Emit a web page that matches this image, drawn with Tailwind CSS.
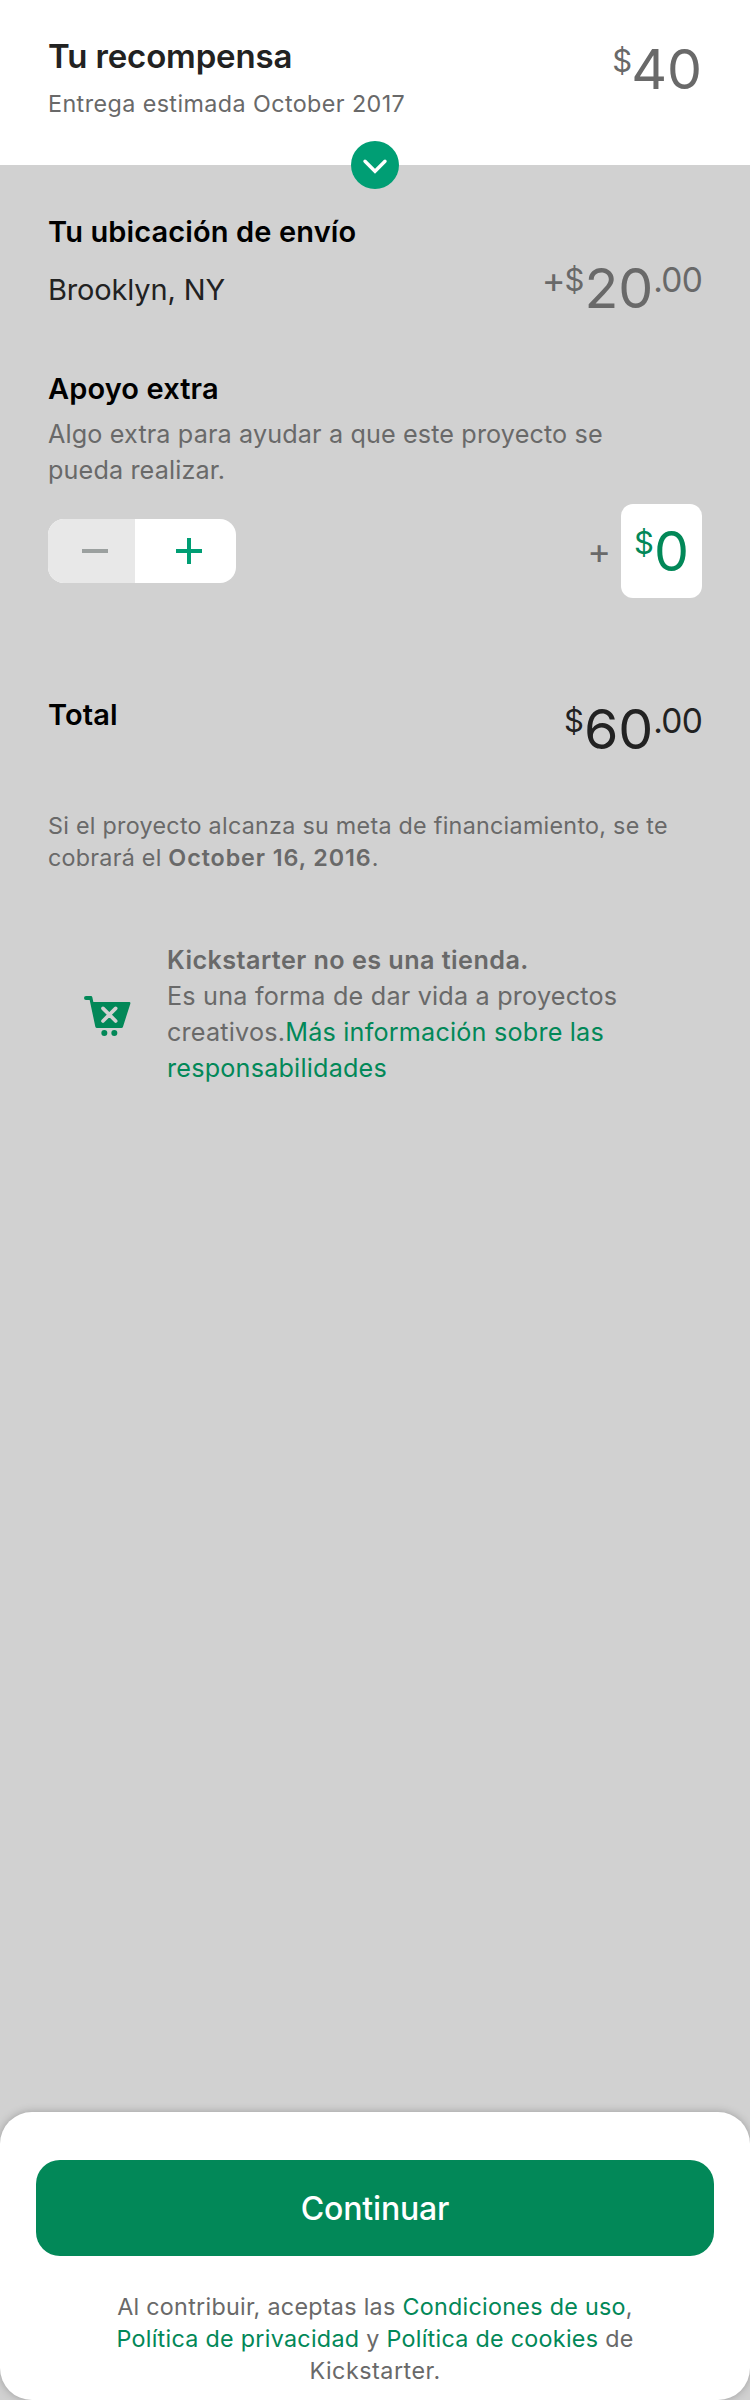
<!DOCTYPE html>
<html lang="es">
<head>
<meta charset="utf-8">
<title>Tu recompensa</title>
<script src="https://cdn.jsdelivr.net/npm/@tailwindcss/browser@4"></script>
</head>
<body class="bg-[#d1d1d1]">
<div class="flex h-[2400px] w-[750px] flex-col overflow-hidden bg-[#d1d1d1] font-['Inter',sans-serif] text-[#696969]">

  <header class="relative flex h-[165px] shrink-0 justify-between bg-white px-12 pt-9">
    <div class="whitespace-nowrap">
      <h1 class="text-[33px] leading-10 font-semibold tracking-[-0.143px] text-[#222222]">Tu recompensa</h1>
      <p class="mt-3 text-[23.3px] leading-8 tracking-[0.42px]">Entrega estimada October 2017</p>
    </div>
    <div class="mt-[5px] flex items-start whitespace-nowrap">
      <span class="-mr-px text-[31px] leading-10">$</span>
      <span class="text-[55.5px] leading-14">40</span>
    </div>
    <div class="absolute top-[141px] left-[351px] size-12 rounded-full bg-[#009e74]">
      <svg viewBox="0 0 48 48" class="size-12" fill="none" stroke="#fff" stroke-width="3.4" stroke-linecap="round"><path d="M14 20.3 24 30.3 34 20.3"/></svg>
    </div>
  </header>

  <main class="flex flex-col px-12 pt-[47px]">
    <section>
      <h2 class="text-[29px] leading-10 font-semibold tracking-[0.12px] text-black">Tu ubicación de envío</h2>
      <div class="flex items-start justify-between whitespace-nowrap">
        <p class="mt-[18px] text-[29px] leading-10 tracking-[-0.15px] text-[#222222]">Brooklyn, NY</p>
        <div class="mt-2 flex items-start">
          <span class="-mr-px text-[36px] leading-10">+</span>
          <span class="text-[31px] leading-10">$</span>
          <span class="text-[55.5px] leading-14">20</span>
          <span class="text-[33.5px] leading-10 tracking-[-0.8px]">.00</span>
        </div>
      </div>
    </section>

    <section class="mt-[53px]">
      <h2 class="text-[29px] leading-10 font-semibold tracking-[0.12px] text-black">Apoyo extra</h2>
      <p class="mt-[7px] text-[25.2px] leading-9 tracking-[0.13px] whitespace-nowrap">Algo extra para ayudar a que este proyecto se<br>pueda realizar.</p>
      <div class="mt-4 flex items-center justify-between">
        <div class="flex h-16 w-[188px] overflow-hidden rounded-2xl bg-white">
          <button class="flex w-[87px] items-center bg-[#e8e8e8] pl-[34px]"><span class="h-1 w-[26px] bg-[#9ba09f]"></span></button>
          <button class="flex flex-1 items-center pl-[41px]">
            <svg viewBox="0 0 26 26" class="size-[26px]" fill="#009e74"><path d="M11 0h4v11h11v4H15v11h-4V15H0v-4h11z"/></svg>
          </button>
        </div>
        <div class="flex items-center">
          <span class="mr-[10px] text-[36px] leading-10">+</span>
          <div class="flex h-[94px] w-[81px] items-start justify-center rounded-xl bg-white pt-[19px] text-[#028858]">
            <span class="text-[31px] leading-10">$</span>
            <span class="text-[55.5px] leading-14">0</span>
          </div>
        </div>
      </div>
    </section>

    <section class="mt-[97px] flex items-start justify-between whitespace-nowrap">
      <h2 class="text-[29px] leading-10 font-semibold tracking-[0.108px] text-black">Total</h2>
      <div class="mt-1.5 flex items-start text-[#222222]">
        <span class="text-[31px] leading-10">$</span>
        <span class="text-[55.5px] leading-14">60</span>
        <span class="text-[33.5px] leading-10 tracking-[-0.8px]">.00</span>
      </div>
    </section>

    <p class="mt-[53px] text-[23.3px] leading-8 tracking-[0.273px] whitespace-nowrap">Si el proyecto alcanza su meta de financiamiento, se te<br><span class="tracking-[0.25px]">cobrará el </span><b class="font-semibold tracking-[0.92px]">October 16, 2016</b>.</p>

    <section class="mt-[68px] flex items-start pl-9">
      <svg viewBox="72 78 141 120" class="mt-[54px] h-10 w-[47px]" fill="#028858">
        <path d="M100 96H208q4 0 3 5L189 170q-1 4-5 4H111q-4 0-5-4L89 90H78a6 6 0 0 1 0-12H93q3 0 4 4Z"/>
        <circle cx="133" cy="189" r="9"/><circle cx="163" cy="189" r="9"/>
        <path d="m129 115 38 38m0-38-38 38" stroke="#d1d1d1" stroke-width="11" stroke-linecap="round"/>
      </svg>
      <p class="ml-9 text-[25.2px] leading-9 tracking-[0.2px] whitespace-nowrap"><b class="font-semibold tracking-[0.44px]">Kickstarter no es una tienda.</b><br>Es una forma de dar vida a proyectos<br>creativos.<a class="text-[#028858]">Más información sobre las<br>responsabilidades</a></p>
    </section>
  </main>

  <footer class="mt-auto h-[288px] shrink-0 rounded-[32px] bg-white px-9 pt-12 shadow-[0_0_8px_rgba(0,0,0,0.25)]">
    <button class="flex h-24 w-full items-center justify-center rounded-3xl bg-[#028858] pt-px text-[32px] leading-10 font-[550] tracking-[-0.15px] text-white">Continuar</button>
    <p class="mt-[35px] text-center text-[23.3px] leading-8 tracking-[0.29px] whitespace-nowrap">Al contribuir, aceptas las <a class="text-[#028858]">Condiciones de uso</a>,<br><a class="text-[#028858]">Política de privacidad</a> y <a class="text-[#028858]">Política de cookies</a> de<br><span class="tracking-[0.519px]">Kickstarter.</span></p>
  </footer>
</div>
</body>
</html>
